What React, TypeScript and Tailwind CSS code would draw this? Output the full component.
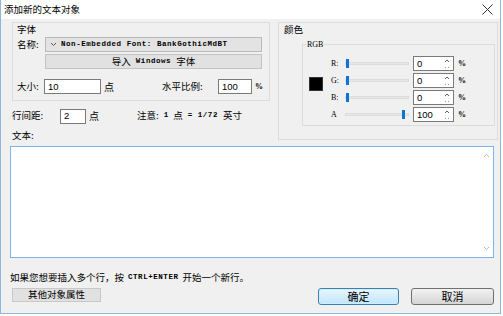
import React from "react";

const cjk = "font-['Noto_Sans_CJK_SC',sans-serif]";
const mono = "font-['Liberation_Mono',monospace]";
const serif = "font-['Liberation_Serif',serif]";

function NumBox({ value, w, spin = false }: { value: string; w: string; spin?: boolean }) {
  return (
    <div className={`${w} h-[15px] bg-white border border-[#7a7a7a] flex items-center justify-between pl-[3px] pr-[2px]`}>
      <span className="font-['Liberation_Sans',sans-serif] text-[9.5px] leading-none text-black">{value}</span>
      {spin && (
        <svg width="8" height="11" viewBox="0 0 8 11">
          <path d="M2 4 L4 2 L6 4" fill="none" stroke="#606060" strokeWidth="1" />
          <path d="M2 9 L3 10 M5 10 L6 9" fill="none" stroke="#9a9a9a" strokeWidth="1" />
        </svg>
      )}
    </div>
  );
}

function Slider({ pos }: { pos: "start" | "end" }) {
  return (
    <div className="w-[64px] h-[15px] flex items-center relative">
      <div className="w-full h-[3px] bg-[#e7e7e7] border border-[#dcdcdc]" />
      <div className={`absolute top-[3px] w-[3px] h-[9px] bg-[#0a74d8] ${pos === "start" ? "left-[1px]" : "right-[4px]"}`} />
    </div>
  );
}

function RgbRow({ label, value, pos }: { label: string; value: string; pos: "start" | "end" }) {
  return (
    <div className="flex items-center h-[15px]">
      <span className={`${serif} w-[14px] text-[8px] leading-none text-black`}>{label}</span>
      <Slider pos={pos} />
      <div className="ml-[4px]">
        <NumBox value={value} w="w-[41px]" spin />
      </div>
      <span className={`${serif} ml-[4px] text-[8px] font-bold leading-none`}>%</span>
    </div>
  );
}

export default function App() {
  return (
    <div className="w-[503px] h-[316px] bg-white">
      <div className="w-[501px] h-[314px] border border-t-0 border-[#8db7df] flex flex-col bg-[#f0f0f0] text-black">
        {/* Title bar */}
        <div className="h-[19px] bg-white flex items-center justify-between pl-[3px] pr-[7px]">
          <span className={`${cjk} text-[9.5px] leading-none`}>添加新的文本对象</span>
          <svg width="11" height="11" viewBox="0 0 11 11">
            <path d="M0.5 0.5 L10.5 10.5 M10.5 0.5 L0.5 10.5" stroke="#333" strokeWidth="1" />
          </svg>
        </div>

        {/* Body */}
        <div className="flex-1 flex flex-col">
          <div className="flex mt-[3px]">
            {/* Left column */}
            <div className="ml-[11px] w-[258px] flex flex-col">
              <div className="h-[79px] border border-[#dcdcdc] flex flex-col">
                <div className={`${cjk} pl-[4px] pt-[1px] text-[9.5px] leading-[10px]`}>字体</div>
                <div className="flex items-center mt-[3px] h-[15px]">
                  <span className={`${cjk} w-[32px] pl-[4px] text-[9.5px] leading-none`}>名称:</span>
                  <div className="w-[217px] h-[15px] bg-[#e3e3e3] border border-[#b9b9b9] flex items-center pl-[4px] gap-[4px]">
                    <svg width="7" height="5" viewBox="0 0 7 5">
                      <path d="M1 1 L3.5 3.5 L6 1" fill="none" stroke="#555" strokeWidth="1" />
                    </svg>
                    <span className={`${mono} text-[7.5px] font-bold leading-none tracking-[0.55px]`}>Non-Embedded Font: BankGothicMdBT</span>
                  </div>
                </div>
                <div className="ml-[32px] mt-[2px] w-[217px] h-[15px] bg-[#e1e1e1] border border-[#c3c3c3] flex items-center justify-center gap-[5px]">
                  <span className={`${cjk} text-[9.5px] leading-none`}>导入</span>
                  <span className={`${mono} text-[7.5px] font-bold leading-none tracking-[0.55px]`}>Windows</span>
                  <span className={`${cjk} text-[9.5px] leading-none`}>字体</span>
                </div>
                <div className="flex items-center mt-[10px] h-[15px]">
                  <span className={`${cjk} w-[31px] pl-[4px] text-[9.5px] leading-none`}>大小:</span>
                  <NumBox value="10" w="w-[57px]" />
                  <span className={`${cjk} ml-[3px] text-[10px] leading-none`}>点</span>
                  <span className={`${cjk} ml-[48px] w-[56px] text-[9.5px] leading-none`}>水平比例:</span>
                  <NumBox value="100" w="w-[34px]" />
                  <span className={`${serif} ml-[3px] text-[8px] font-bold leading-none`}>%</span>
                </div>
              </div>

              <div className="flex items-center mt-[8px] h-[14px]">
                <span className={`${cjk} w-[48px] text-[9.5px] leading-none`}>行间距:</span>
                <NumBox value="2" w="w-[26px]" />
                <span className={`${cjk} ml-[3px] text-[10px] leading-none`}>点</span>
                <div className={`${cjk} ml-[38px] flex items-center text-[9.5px] leading-none`}>
                  <span>注意:</span>
                  <span className={`${mono} ml-[5px] text-[7.5px] font-bold`}>1</span>
                  <span className="ml-[5px]">点</span>
                  <span className={`${mono} ml-[5px] text-[7.5px] font-bold tracking-[0.55px]`}>=</span>
                  <span className={`${mono} ml-[5px] text-[7.5px] font-bold tracking-[0.55px]`}>1/72</span>
                  <span className="ml-[5px]">英寸</span>
                </div>
              </div>

              <div className={`${cjk} mt-[7px] text-[9.5px] leading-[10px]`}>文本:</div>
            </div>

            {/* Right column: colour group */}
            <div className="ml-[8px] w-[220px] h-[118px] border border-[#dcdcdc] flex flex-col">
              <div className={`${cjk} pl-[5px] pt-[1px] text-[9.5px] leading-[10px]`}>颜色</div>
              <div className="ml-[23px] mt-[10px] w-[193px] h-[82px] border border-[#dcdcdc] relative flex items-start">
                <span className={`${serif} absolute -top-[5px] left-[3px] bg-[#f0f0f0] px-[1px] text-[8px] leading-[9px]`}>RGB</span>
                <div className="ml-[6px] mt-[32px] w-[14px] h-[14px] bg-black border border-[#333]" />
                <div className="ml-[8px] mt-[11px] flex flex-col gap-[2px]">
                  <RgbRow label="R:" value="0" pos="start" />
                  <RgbRow label="G:" value="0" pos="start" />
                  <RgbRow label="B:" value="0" pos="start" />
                  <RgbRow label="A" value="100" pos="end" />
                </div>
              </div>
            </div>
          </div>

          {/* Text area */}
          <div className="ml-[9px] mt-[6px] w-[484px] h-[112px] bg-white border border-[#7eb4ea] flex justify-end">
            <div className="w-[12px] mr-[1px] flex flex-col items-center justify-between py-[6px]">
              <svg width="7" height="5" viewBox="0 0 7 5">
                <path d="M1 4 L3.5 1.5 L6 4" fill="none" stroke="#b8b8b8" strokeWidth="1" />
              </svg>
              <svg width="7" height="5" viewBox="0 0 7 5">
                <path d="M1 1 L3.5 3.5 L6 1" fill="none" stroke="#b8b8b8" strokeWidth="1" />
              </svg>
            </div>
          </div>

          <div className={`${cjk} ml-[9px] mt-[14px] flex items-center text-[9.5px] leading-[10px]`}>
            <span>如果您想要插入多个行，按</span>
            <span className={`${mono} ml-[4px] text-[7.5px] font-bold tracking-[0.55px]`}>CTRL+ENTER</span>
            <span className="ml-[4px]">开始一个新行。</span>
          </div>

          <div className="flex items-start mt-[6px]">
            <div className="ml-[11px] w-[89px] h-[14px] bg-[#e1e1e1] border border-[#c8c8c8] flex items-center justify-center">
              <span className={`${cjk} text-[9.5px] leading-none`}>其他对象属性</span>
            </div>
            <div className="ml-auto w-[81px] h-[17px] rounded-[3px] border border-[#3c7fb1] bg-gradient-to-b from-[#eaf6fd] to-[#bee6fd] shadow-[inset_0_0_0_1px_#cfeefd] flex items-center justify-center">
              <span className={`${cjk} text-[11px] leading-none`}>确定</span>
            </div>
            <div className="ml-[12px] mr-[6px] w-[83px] h-[17px] rounded-[3px] border border-[#707070] bg-gradient-to-b from-[#f2f2f2] to-[#d5d5d5] flex items-center justify-center">
              <span className={`${cjk} text-[11px] leading-none`}>取消</span>
            </div>
          </div>
        </div>
      </div>
    </div>
  );
}
